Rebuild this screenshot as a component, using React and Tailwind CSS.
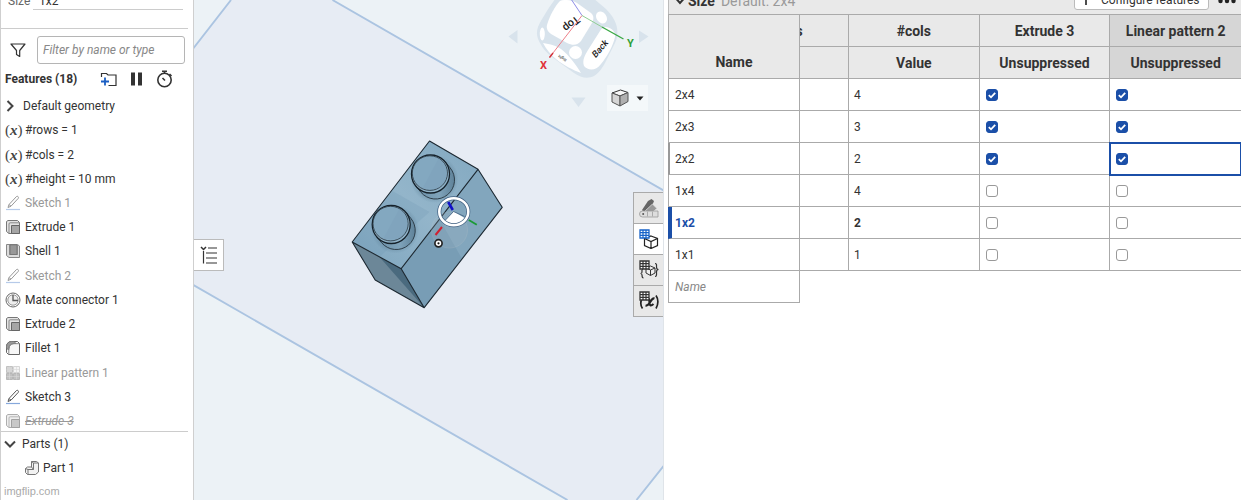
import React from "react";

const features = [
  { icon: "variable", label: "#rows = 1" },
  { icon: "variable", label: "#cols = 2" },
  { icon: "variable", label: "#height = 10 mm" },
  { icon: "sketch", label: "Sketch 1", muted: true },
  { icon: "extrude", label: "Extrude 1" },
  { icon: "shell", label: "Shell 1" },
  { icon: "sketch", label: "Sketch 2", muted: true },
  { icon: "mate", label: "Mate connector 1" },
  { icon: "extrude", label: "Extrude 2" },
  { icon: "fillet", label: "Fillet 1" },
  { icon: "pattern", label: "Linear pattern 1", muted: true },
  { icon: "sketch", label: "Sketch 3" },
  { icon: "extrude", label: "Extrude 3", muted: true, suppressed: true },
];

const rows = [
  { name: "2x4", cols: "4", on: true },
  { name: "2x3", cols: "3", on: true },
  { name: "2x2", cols: "2", on: true, focused: true },
  { name: "1x4", cols: "4", on: false },
  { name: "1x2", cols: "2", on: false, active: true },
  { name: "1x1", cols: "1", on: false },
];

function VariableIcon() {
  return (
    <span
      aria-hidden="true"
      className="w-4 shrink-0 whitespace-nowrap text-center font-['Liberation_Serif',serif] text-[15px] leading-4 text-[#444]"
    >
      (<b className="italic">x</b>)
    </span>
  );
}

function FeatureIcon({ type }) {
  if (type === "variable") return <VariableIcon />;
  return (
    <svg viewBox="0 0 16 16" className="size-4 shrink-0" fill="none" stroke="#555" strokeWidth="1">
      {type === "sketch" && (
        <>
          <path d="M3 12.5 4 9.5 11.5 1.5c1-.8 2.600.6 1.800 1.800L6 11.200z M4 9.500l2 1.700" />
          <path d="M1 14.500h14" stroke="#86a8dc" strokeWidth="1.200" />
        </>
      )}
      {type === "extrude" && (
        <>
          <path d="M1.500 2.500 3 1.500h9.500l2 2V14.500H4L1.500 12.500z" fill="#e3e3e3" stroke="#777" />
          <path d="M4 14.500V5c0-.8.400-1.200 1.200-1.200h9.300" stroke="#888" />
          <path d="M6.500 6.500h8v8h-8z" fill="#a5a5a5" stroke="#666" />
        </>
      )}
      {type === "shell" && (
        <>
          <path d="M1.500 1.500h11l2 1.500v11.500H4l-2.500-2z" fill="#dcdcdc" stroke="#888" />
          <path d="M4.500 2v10M12.500 2v10" stroke="#999" />
          <path d="M5 1.800h7v9.700H5z" fill="#989898" stroke="#777" />
        </>
      )}
      {type === "mate" && (
        <>
          <circle cx="8" cy="8" r="7" stroke="#666" />
          <circle cx="8" cy="8" r="5.200" fill="#eee" stroke="#999" />
          <path d="M8 3v5.500h5" stroke="#555" strokeWidth="1.300" />
        </>
      )}
      {type === "fillet" && (
        <>
          <path d="M1.500 12.500V6.500c0-3 2-5 5-5h6l2 2v11h-11z" fill="#f7f7f7" stroke="#666" />
          <path d="M1.500 8V6.500c0-3 2-5 5-5H9L11 3.500H9C6 3.500 4 5.500 4 8.500L3.500 10z" fill="#9a9a9a" stroke="#777" />
          <path d="M3.800 14.500V8.500c0-3 2-4.800 5-4.800h5.700" stroke="#888" />
        </>
      )}
      {type === "pattern" && (
        <>
          <path d="M1.500 1.500h6v6h-6z" fill="#bbb" stroke="#999" />
          <path d="M8.500 1.500h6v6h-6z" fill="#eee" stroke="#bbb" />
          <path d="M1.500 8.500h6v6h-6zM8.500 8.500h6v6h-6z" fill="#999" stroke="#888" />
          <path d="M4.500 1.500v13M11.500 1.500v13M1.500 4.500h13M1.500 11.500h13" stroke="#c0c0c0" strokeWidth=".6" />
        </>
      )}
    </svg>
  );
}

function FeaturePanel() {
  return (
    <aside className="flex min-h-0 flex-col overflow-hidden border-x border-[#cfcfcf] bg-white">
      <div className="flex h-[10px] shrink-0 gap-[3px] overflow-hidden pr-[10px] pl-[7px] leading-[2px]">
        <label htmlFor="size" className="w-[22px] text-[#666]">
          Size
        </label>
        <div className="flex-1 border-b border-[#ccc]">
          <button id="size" type="button" className="block pl-[6px] leading-[2px]">
            1x2
          </button>
        </div>
      </div>
      <div className="mr-[5px] h-[19px] shrink-0 border-b border-[#ccc]" />
      <div className="mt-[7px] flex h-7 shrink-0 items-center gap-[11px] pr-2 pl-[9px]">
        <svg viewBox="0 0 16 16" className="size-4" fill="none" stroke="#333" strokeWidth="1.200" strokeLinejoin="round">
          <path d="M1 2h14L9.700 8.500v6l-3.200-2v-4z" />
        </svg>
        <input
          aria-label="Filter features"
          placeholder="Filter by name or type"
          className="h-7 min-w-0 flex-1 rounded-[3px] border border-[#b5b5b5] px-[5px] italic outline-none placeholder:text-[#888]"
        />
      </div>
      <div className="flex h-[30px] shrink-0 items-center pl-1">
        <h2 className="w-[94px] font-bold">Features (18)</h2>
        <button type="button" aria-label="Add folder">
          <svg viewBox="0 0 18 16" className="h-4 w-[18px]" fill="none" stroke="#333" strokeWidth="1.200">
            <path d="M2.500 6V2.500h5L9 4h8v10.500H9.500" />
            <path d="M6 6.500v8M2 10.500h8" stroke="#1b5fc4" strokeWidth="1.800" />
          </svg>
        </button>
        <button type="button" aria-label="Pause" className="ml-3">
          <svg viewBox="0 0 14 16" className="h-4 w-[14px]" fill="#333">
            <path d="M2 1.500h4v13H2zM9 1.500h4v13H9z" />
          </svg>
        </button>
        <button type="button" aria-label="Timing" className="ml-3">
          <svg viewBox="0 0 18 18" className="size-[18px]" fill="none" stroke="#333" strokeWidth="1.600">
            <circle cx="9.500" cy="10" r="6.700" />
            <path d="M7 1.200h5M9.500 1v2.500M14.500 4l2 2M10 10.500 7.500 8" />
          </svg>
        </button>
      </div>
      <ul className="-mb-0.5 flex min-h-0 flex-1 flex-col">
        <li className="flex min-h-0 flex-1 items-center gap-2 pl-[5px]">
          <svg viewBox="0 0 9 14" className="h-[14px] w-[9px]" fill="none" stroke="#444" strokeWidth="2">
            <path d="m1.500 2 5 5-5 5" />
          </svg>
          Default geometry
        </li>
        {features.map((f) => (
          <li
            key={f.label}
            className={
              "flex min-h-0 flex-1 items-center gap-1 pl-1 whitespace-nowrap " + (f.muted ? "text-[#999]" : "")
            }
          >
            <span className={"flex " + (f.muted ? "opacity-60" : "")}>
              <FeatureIcon type={f.icon} />
            </span>
            <span className={f.suppressed ? "italic line-through" : ""}>{f.label}</span>
          </li>
        ))}
      </ul>
      <div className="mr-[5px] flex h-[25px] shrink-0 items-center gap-[6px] border-t border-[#ccc] pl-[3px]">
        <svg viewBox="0 0 12 10" className="h-[10px] w-3" fill="none" stroke="#444" strokeWidth="2">
          <path d="m1 2.500 5 5 5-5" />
        </svg>
        Parts (1)
      </div>
      <div className="flex h-6 shrink-0 items-center gap-[3px] pl-[23px]">
        <svg viewBox="0 0 16 16" className="size-4" fill="#f2f2f2" stroke="#777">
          <path d="M7.500 1.500h5l2 1.500v9l-3 2.500h-8l-2-2V8.500l2-1.500h4z" />
          <path d="M7.500 1.500 9.500 3v6.500H4L1.500 8.500M9.500 3h5M9.500 9.500l-2-2.500M4 9.500v5" fill="none" />
        </svg>
        Part 1
      </div>
      <div className="h-5 shrink-0 pl-[3px] font-['Liberation_Sans',sans-serif] text-[11px] leading-[23px] text-[#aaa]">
        imgflip.com
      </div>
    </aside>
  );
}

function Stud({ x, y }) {
  return (
    <g transform={`translate(${x} ${y})`}>
      <ellipse cx="4" cy="5" rx="24" ry="24" fill="url(#studShadow)" />
      <path
        d="M-14.600 12.200-9.600 18.200A19 19 0 0 0 19.600-6.200L14.600-12.200z"
        fill="url(#studSide)"
        stroke="#26343e"
        strokeWidth=".9"
      />
      <circle r="19" fill="#8fb2c8" stroke="#15212a" strokeWidth="1.300" />
      <path d="M-16 7.500C-10 19 12 20 17-3" fill="none" stroke="#c3d8e5" strokeWidth=".9" />
      <ellipse cx="-.6" cy="-.9" rx="17.600" ry="17.300" fill="#83a8c0" stroke="#26343e" strokeWidth=".8" />
      <path d="M-8 14.500 8-15.500C19-9 19 10 6 14.500z" fill="#7b9fb8" opacity=".35" />
    </g>
  );
}

function Scene() {
  return (
    <svg
      role="img"
      aria-label="Part 1"
      viewBox="194 0 470 500"
      preserveAspectRatio="xMidYMid slice"
      className="absolute inset-0 size-full"
    >
      <defs>
        <linearGradient id="studSide" x1="0" y1="0" x2="1" y2="0">
          <stop offset="0" stopColor="#6b90a8" />
          <stop offset=".6" stopColor="#7fa3ba" />
          <stop offset="1" stopColor="#5f8299" />
        </linearGradient>
        <radialGradient id="studShadow">
          <stop offset=".7" stopColor="#55788f" stopOpacity=".5" />
          <stop offset="1" stopColor="#55788f" stopOpacity="0" />
        </radialGradient>
        <linearGradient id="topFace" x1="0" y1="1" x2="1" y2="0">
          <stop offset="0" stopColor="#7fa6bf" />
          <stop offset=".5" stopColor="#93b5ca" />
          <stop offset="1" stopColor="#82a8c0" />
        </linearGradient>
      </defs>
      <path d="M194 48 231.500 0H333L664 190.500V466L637 500H568L194 284.500z" fill="#e7ecf4" />
      <path
        d="M193 49.500 231.500 0M333 0 664 190.500M664 466 637 500M568 500 193 284.500"
        fill="none"
        stroke="#abc4e1"
        strokeWidth="1.900"
      />

      <path d="M430 141 478.500 169.300 401.700 268.700 352.700 242z" fill="url(#topFace)" />
      <path d="M478.500 169.300 502.700 207.300 424.700 307.700 401.700 268.700z" fill="#789db5" />
      <path d="M478.500 169.300 502.700 207.300 462 258 440 219z" fill="#88acc3" opacity=".6" />
      <path d="M352.700 242 401.700 268.700 424.700 307.700 375.700 280z" fill="#6c8798" />
      <path d="M380 257 401.700 268.700 424.700 307.700z" fill="#4a6a7e" />
      <path d="M393 191 430 212 381 256 353 242z" fill="#6f98b3" opacity=".25" />
      <Stud x={431} y={174} />
      <Stud x={391.700} y={224.500} />
      <path
        d="M430 141 478.500 169.300 502.700 207.300 424.700 307.700 375.700 280 352.700 242zM478.500 169.300 401.700 268.700 424.700 307.700M401.700 268.700 352.700 242"
        fill="none"
        stroke="#1c2831"
        strokeWidth="1.100"
        strokeLinejoin="round"
      />

      <circle cx="450" cy="230" r="18" fill="#a9b9c4" opacity=".2" stroke="#ccc" />
      <path d="M454.300 211.500 444.500 221.500C449 227.500 460 227.500 465 218z" fill="#fff" />
      <ellipse cx="454.300" cy="211.700" rx="14.500" ry="13.500" fill="none" stroke="#3f5f80" strokeWidth="4" />
      <ellipse cx="454.300" cy="211.700" rx="14.500" ry="13.500" fill="none" stroke="#fff" strokeWidth="2.600" />
      <path d="M446 220 454 211.500 465 216.500" fill="none" stroke="#3f5f80" strokeWidth=".8" />
      <path d="m448.700 202 4.600 8" stroke="#1010c8" strokeWidth="2.600" />
      <path d="m442.500 227-6.500 8" stroke="#d02030" strokeWidth="2" />
      <path d="m469.300 220 8 4.700" stroke="#1a9a35" strokeWidth="1.800" />
      <circle cx="439" cy="243.300" r="3.600" fill="#fff" stroke="#222" strokeWidth="1.700" />
      <circle cx="439" cy="243.300" r="1.100" fill="#111" />
    </svg>
  );
}

function ViewCube() {
  return (
    <svg viewBox="500 0 160 112" className="absolute top-0 right-[3px] h-28 w-40" role="img" aria-label="View cube">
      <g fill="#d8e3ec">
        <path d="M508.500 36.500 517.500 30v13.500zM639 30.500v12.500l9.500-6.500zM571.500 97.500h14l-7 9.500z" />
        <path d="M556-2C549 7 541 20 538 27 536 33 537 38 540 43 543 49 547 53 552 57L574 73C581 78 588 79 594 76 599 73 603 67 606 61L615 43C618 37 618 30 616 24 614 18 610 13 606 9L593-2z" />
      </g>
      <g fill="#fff">
        <path d="M560 1C555 6 550 15 547 25 546 29 548 32 551 34L567 43C573 46 578 45 581 41L592 23C594 19 594 16 591 13L577 3C572 0 564-1 560 1z" />
        <path d="M606 27C612 28 616 32 615 37 613 46 607 57 601 64 596 71 588 71 584 66 582 60 585 55 588 50L600 31C602 28 604 27 606 27z" />
        <path d="M543 43C550 44 557 46 561 49 569 55 577 66 581 73 573 70 563 65 556 59 551 55 546 49 543 43z" />
        <ellipse cx="601.500" cy="17.500" rx="5" ry="6.500" transform="rotate(-35 601.500 17.500)" />
        <circle cx="575.500" cy="52.500" r="6.500" />
        <ellipse cx="542.300" cy="34" rx="2.500" ry="6.500" />
      </g>
      <g fontFamily="Roboto, sans-serif" textAnchor="middle" fill="#222">
        <text transform="translate(569 21) rotate(142)" fontSize="11" fontWeight="500">Top</text>
        <text transform="translate(602 51) rotate(-50) skewX(-12)" fontSize="9" fontWeight="500">Back</text>
        <text transform="translate(563 57) rotate(210)" fontSize="4">Right</text>
      </g>
      <path d="m571-1 11 16.500" stroke="#8d8de6" />
      <path d="M582 15.500 549.500 57.500" stroke="#ee7f88" />
      <path d="m553 53-3.500 4.500" stroke="#d3303a" strokeWidth="1.400" />
      <path d="m582 15.500 20 11.500" stroke="#8fce94" />
      <path d="m602 27 21.500 12" stroke="#3aa845" strokeWidth="1.400" />
      <g fontFamily="Roboto, sans-serif" fontWeight="700" fontSize="11" textAnchor="middle">
        <text x="543.500" y="69" fill="#e0303a">X</text>
        <text x="630.500" y="47" fill="#2c9f35">Y</text>
      </g>
    </svg>
  );
}

function GridMark({ color }) {
  return (
    <>
      <path d="M1 1h9v8H1z" fill="#fff" stroke={color} strokeWidth="1.300" />
      <path d="M1 3.700h9M1 6.400h9M4 1v8M7 1v8" stroke={color} strokeWidth="1.200" />
    </>
  );
}

const tabs = [
  {
    label: "Appearances",
    art: (
      <>
        <path d="M9 3 12.500 1 15 3 13 8 4.500 14 3 12z" fill="#666" />
        <path d="m13.500 6 4.500 4.500L10 17 5 14z" fill="#999" stroke="#e9e9e9" strokeWidth=".7" />
        <path d="M3.500 13H19v6H3.500a3 3 0 0 1 0-6z" fill="#ddd" stroke="#999" strokeWidth=".8" />
        <path d="M8.500 13.500v5M13.500 13.500v5" stroke="#aaa" />
        <circle cx="4.200" cy="16" r="1" fill="#555" />
      </>
    ),
  },
  {
    label: "Configurations",
    selected: true,
    art: (
      <>
        <path d="m12 7 6.500 2.500v7L12 19.500l-6.500-3v-7zM5.500 9.500 12 12.500l6.500-3M12 12.500v7" fill="#fff" stroke="#222" strokeWidth="1.200" />
        <GridMark color="#1763c9" />
      </>
    ),
  },
  {
    label: "Configured properties",
    art: (
      <>
        <path d="m11.500 6 4.500 2v5l-4.500 2.500L7 13V8zM7 8l4.500 2L16 8M11.500 10v5.500" fill="#eee" stroke="#333" />
        <path d="M4 9.500c-1.500 0-1 1.500-1 2.500 0 1-.5 1.500-1.500 1.500 1 0 1.500.5 1.500 1.500 0 1.500 0 3 1.500 3M16 3.500c2 0 1.500 2 1.500 3.500 0 1.500.5 2.500 2 2.500-1.500 0-2 1-2 2.500 0 2 .5 4.500-1.500 4.500" fill="none" stroke="#333" strokeWidth="1.200" />
        <GridMark color="#333" />
      </>
    ),
  },
  {
    label: "Variable table",
    art: (
      <>
        <path d="M3 7.500c-1.500 3-1.500 7 .5 10M17 4.500c2.500 3.500 2.500 9 0 13" fill="none" stroke="#222" strokeWidth="1.700" />
        <path d="M7 8.500c3-2 3.500 0 3.500 3s1 4 4 1.500M15.500 7.500c-4-1.500-4 8-9 7" fill="none" stroke="#222" strokeWidth="2.200" />
        <GridMark color="#333" />
      </>
    ),
  },
];

function Viewport() {
  return (
    <main className="relative min-w-0 overflow-hidden border-r border-[#dfe4e9] bg-[#ecf2f6]">
      <Scene />
      <ViewCube />
      <button
        type="button"
        aria-label="View options"
        className="absolute top-[85px] right-[15px] flex h-[26px] w-[41px] items-center justify-center gap-[7px] bg-[#f4f8fa]"
      >
        <svg viewBox="0 0 18 18" className="size-[18px]" stroke="#333" strokeLinejoin="round">
          <path d="M1 4 9.500 1 17 3.500 9 7z" fill="#f7f7f7" />
          <path d="M1 4 9 7v10l-8-4z" fill="#d5d5d5" stroke="#555" />
          <path d="m9 7 8-3.500v9L9 17z" fill="#b0b0b0" stroke="#555" />
        </svg>
        <svg viewBox="0 0 8 5" className="h-[5px] w-2" fill="#222">
          <path d="M.500.500h7L4 4.500z" />
        </svg>
      </button>
      <button
        type="button"
        aria-label="Toggle feature list"
        className="absolute top-[239px] left-0 flex h-8 w-[30px] items-center justify-center border border-l-0 border-[#bbb] bg-white"
      >
        <svg viewBox="0 0 18 18" className="size-[18px]" fill="none" stroke="#333" strokeWidth="1.200">
          <path d="M8 2h9M6 7h11M6 12h11M6 17h11M3.500 5v12.500" />
          <path d="m1 1 2.500 2.500L6 1" strokeWidth="1.500" />
        </svg>
      </button>
      <nav aria-label="Panels" className="absolute top-48 right-0 flex w-[30px] flex-col border border-b-0 border-r-0 border-[#aaa]">
        {tabs.map((t) => (
          <button
            key={t.label}
            type="button"
            aria-label={t.label}
            className={
              "flex h-[31px] items-center justify-center border-b border-[#aaa] " +
              (t.selected ? "bg-white" : "bg-[#e8e8e8]")
            }
          >
            <svg viewBox="0 0 20 20" className="size-5">{t.art}</svg>
          </button>
        ))}
      </nav>
    </main>
  );
}

const headCell = "h-8 border-b border-[#aaa] p-0 text-center font-bold whitespace-nowrap overflow-hidden";

function Check({ label, checked }) {
  return (
    <label className="relative flex size-3">
      <input
        type="checkbox"
        aria-label={label}
        defaultChecked={checked}
        className="peer size-3 appearance-none rounded-[3px] border border-[#999] bg-white checked:border-[#1b4fa8] checked:bg-[#1b4fa8]"
      />
      <svg
        viewBox="0 0 12 12"
        className="pointer-events-none absolute inset-0 hidden size-3 peer-checked:block"
        fill="none"
        stroke="#fff"
        strokeWidth="1.800"
      >
        <path d="M2.800 6.200 5 8.300 9.200 3.800" />
      </svg>
    </label>
  );
}

function ConfigPanel() {
  return (
    <section className="min-w-0 overflow-hidden bg-white pl-1">
      <header className="flex h-[15px] items-start overflow-hidden border-l border-[#bbb] bg-[#e9e9e9] pr-1 pl-[5px] text-sm">
        <svg viewBox="0 0 12 10" className="-mt-1 h-[10px] w-3" fill="none" stroke="#333" strokeWidth="2">
          <path d="m2 2.500 4 4.500 4-4.500" />
        </svg>
        <h2 className="ml-0.5 font-bold leading-[3px]">Size</h2>
        <span className="ml-[6px] leading-[3px] text-[#999]">Default: 2x4</span>
        <button
          type="button"
          className="-mt-4 ml-auto flex h-[26px] w-[135px] items-center gap-[10px] rounded-[3px] border border-[#bbb] bg-white pl-[6px] text-xs"
        >
          <svg viewBox="0 0 10 12" className="mt-1 h-3 w-[10px]" stroke="#222" strokeWidth="1.600">
            <path d="M5 0v12M0 6h10" />
          </svg>
          <span className="mt-[6px] whitespace-nowrap">Configure features</span>
        </button>
        <button type="button" aria-label="More" className="ml-2">
          <svg viewBox="0 0 20 6" className="h-[6px] w-5" fill="#222">
            <circle cx="3.500" cy="1" r="2.200" />
            <circle cx="10" cy="1" r="2.200" />
            <circle cx="16.500" cy="1" r="2.200" />
          </svg>
        </button>
      </header>
      <table className="-mt-px w-full table-fixed border-separate border-spacing-0 border-t border-[#aaa]">
        <colgroup>
          <col className="w-[132px]" />
          <col className="w-[49px]" />
          <col />
          <col />
          <col />
        </colgroup>
        <thead className="bg-[#e9e9e9] text-sm">
          <tr>
            <th rowSpan={2} className="border-x border-b border-[#aaa] p-0 pb-[8px] align-bottom font-bold leading-4">
              Name
            </th>
            <th className={headCell + " border-r"}>
              <div className="-ml-[82px] w-[131px]">#rows</div>
            </th>
            <th className={headCell + " border-r"}>#cols</th>
            <th className={headCell + " border-r"}>Extrude 3</th>
            <th className={headCell + " bg-[#d6d6d6]"}>Linear pattern 2</th>
          </tr>
          <tr>
            <th className={headCell + " border-r"}>
              <div className="-ml-[84px] w-[131px]">Value</div>
            </th>
            <th className={headCell + " border-r"}>Value</th>
            <th className={headCell + " border-r"}>Unsuppressed</th>
            <th className={headCell + " bg-[#d6d6d6]"}>Unsuppressed</th>
          </tr>
        </thead>
        <tbody>
          {rows.map((r) => (
            <tr key={r.name} className={r.active ? "font-bold" : ""}>
              <td
                className={
                  "h-8 border-r border-b border-[#aaa] p-0 " +
                  (r.active
                    ? "border-l-4 border-l-[#1b4fa8] pl-[3px] text-[#1b4fa8]"
                    : r.focused
                      ? "border-l-2 border-l-[#999] pl-[5px]"
                      : "border-l pl-[6px]")
                }
              >
                {r.name}
              </td>
              <td className="border-r border-b border-[#aaa] p-0" />
              <td className="border-r border-b border-[#aaa] p-0 pl-[5px]">{r.cols}</td>
              <td className="border-r border-b border-[#aaa] p-0 pl-[6px]">
                <Check label={r.name + " Extrude 3"} checked={r.on} />
              </td>
              <td
                className={
                  "border-b border-[#aaa] p-0 pl-[6px] " +
                  (r.focused ? "outline-2 -outline-offset-1 outline-[#1b4fa8]" : "")
                }
              >
                <Check label={r.name + " Linear pattern 2"} checked={r.on} />
              </td>
            </tr>
          ))}
          <tr>
            <td className="h-8 border-x border-b border-[#aaa] p-0">
              <input
                aria-label="New configuration name"
                placeholder="Name"
                className="w-full pl-[6px] italic outline-none placeholder:text-[#888]"
              />
            </td>
          </tr>
        </tbody>
      </table>
    </section>
  );
}

export default function App() {
  return (
    <div className="grid h-screen grid-cols-[194px_470fr_577fr] grid-rows-1 overflow-hidden bg-white font-[Roboto,sans-serif] text-xs leading-4 text-[#333]">
      <FeaturePanel />
      <Viewport />
      <ConfigPanel />
    </div>
  );
}
